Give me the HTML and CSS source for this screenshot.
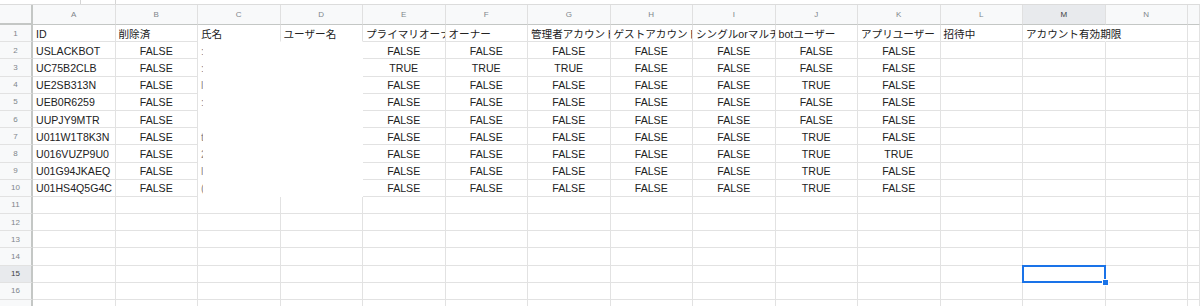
FILE: index.html
```html
<!DOCTYPE html>
<html lang="ja">
<head>
    <meta charset="UTF-8">
    <title>Slack users</title>
    <link rel="stylesheet" href="styles.css">
</head>
<body>
<div class="topbar"><div class="fx-stub"></div></div>
<div class="sheet" id="sheet"></div>

<script>
    const sheet = document.getElementById('sheet');
    const letters = ['A','B','C','D','E','F','G','H','I','J','K','L','M','N',''];

    const titles = ['ID','削除済','氏名','ユーザー名','プライマリオーナー','オーナー','管理者アカウント',
        'ゲストアカウント','シングルorマルチチャンネルゲスト','botユーザー','アプリユーザー','招待中','アカウント有効期限'];

    // id, hidden name start, flags for B,E,F,G,H,I,J,K
    const users = [
        ['USLACKBOT',   ':', 'FFFFFFFF'],
        ['UC75B2CLB',   ':', 'FTTTFFFF'],
        ['UE2SB313N',   'l', 'FFFFFFTF'],
        ['UEB0R6259',   ':', 'FFFFFFFF'],
        ['UUPJY9MTR',   '',  'FFFFFFFF'],
        ['U011W1T8K3N', 't', 'FFFFFFTF'],
        ['U016VUZP9U0', '2', 'FFFFFFTT'],
        ['U01G94JKAEQ', 'l', 'FFFFFFTF'],
        ['U01HS4Q5G4C', '(', 'FFFFFFTF']
    ];
    const boolCols = [2, 5, 6, 7, 8, 9, 10, 11];

    const selCol = 13, selRow = 15, totalRows = 17;

    function cell(cls, text) {
        const div = document.createElement('div');
        div.className = cls;
        if (text) div.textContent = text;
        sheet.appendChild(div);
        return div;
    }

    // column header row
    cell('corner');
    letters.forEach((l, i) => {
        cell('colhead' + (i + 1 === selCol ? ' active' : ''), l);
    });

    for (let r = 1; r <= totalRows; r++) {
        cell('rowhead' + (r === selRow ? ' active' : ''), String(r));
        const user = users[r - 2];

        for (let c = 1; c <= letters.length; c++) {
            let cls = 'cell';
            let text = '';

            if (r === 1 && c <= titles.length) {
                text = titles[c - 1];
                if (c === 13) cls += ' spill';
                if (c === 3 || c === 4) cls += ' hidden-below';
            } else if (user) {
                if (c === 1) text = user[0];
                const bi = boolCols.indexOf(c);
                if (bi >= 0) {
                    text = user[2][bi] === 'T' ? 'TRUE' : 'FALSE';
                    cls += ' bool';
                }
                if (c === 3 || c === 4) cls += ' hidden';
            }
            if (r === selRow && c === selCol) cls += ' selected';

            const div = cell(cls, text);
            if (user && c === 3 && user[1]) {
                const frag = document.createElement('span');
                frag.className = 'frag';
                frag.textContent = user[1];
                div.appendChild(frag);
            }
        }
    }
</script>
</body>
</html>
```
FILE: styles.css
```css
body {
    margin: 0;
    background: #fff;
    font-family: "Liberation Sans", Arial, "Noto Sans CJK JP", sans-serif;
    color: #222;
    overflow: hidden;
}
.topbar {
    height: 4px;
}
.fx-stub {
    margin-left: 80px;
    width: 34px;
    height: 4px;
    border-left: 1px solid #d5d5d5;
    border-right: 1px solid #d5d5d5;
}
.sheet {
    display: grid;
    grid-template-columns: 33px repeat(14, 82.5px) 1fr;
    grid-template-rows: 20px repeat(17, 17.2px);
    border-top: 1px solid #dcdcdc;
}
.corner {
    background: #f8f9fa;
    border-right: 2px solid #c4c7c5;
    border-bottom: 2px solid #c4c7c5;
    box-sizing: border-box;
}
.colhead {
    background: #f8f9fa;
    color: #80868b;
    font-size: 8px;
    display: flex;
    align-items: center;
    justify-content: center;
    border-right: 1px solid #e0e0e0;
    border-bottom: 1px solid #c4c7c5;
    box-sizing: border-box;
}
.rowhead {
    background: #f8f9fa;
    color: #80868b;
    font-size: 8px;
    display: flex;
    align-items: center;
    justify-content: center;
    border-right: 2px solid #c4c7c5;
    border-bottom: 1px solid #e2e2e2;
    box-sizing: border-box;
}
.active {
    background: #e8eaed;
    color: #3c4043;
}
.cell {
    font-size: 10.6px;
    padding: 1px 3px 0;
    display: flex;
    align-items: center;
    white-space: nowrap;
    overflow: hidden;
    border-right: 1px solid #e2e2e2;
    border-bottom: 1px solid #e2e2e2;
    box-sizing: border-box;
}
.bool {
    justify-content: center;
}
.spill {
    overflow: visible;
    border-right-color: transparent;
}
.hidden-below {
    border-bottom-color: #fff;
}
.hidden {
    border-right-color: #fff;
    border-bottom-color: #fff;
}
.frag {
    display: inline-block;
    width: 1.5px;
    overflow: hidden;
    color: #888;
}
.selected {
    position: relative;
    overflow: visible;
}
.selected::before {
    content: "";
    position: absolute;
    left: -1px;
    top: -1px;
    right: -1px;
    bottom: -1px;
    border: 2px solid #1a73e8;
}
.selected::after {
    content: "";
    position: absolute;
    right: -4px;
    bottom: -4px;
    width: 5px;
    height: 5px;
    background: #1a73e8;
    border: 1px solid #fff;
}
```
